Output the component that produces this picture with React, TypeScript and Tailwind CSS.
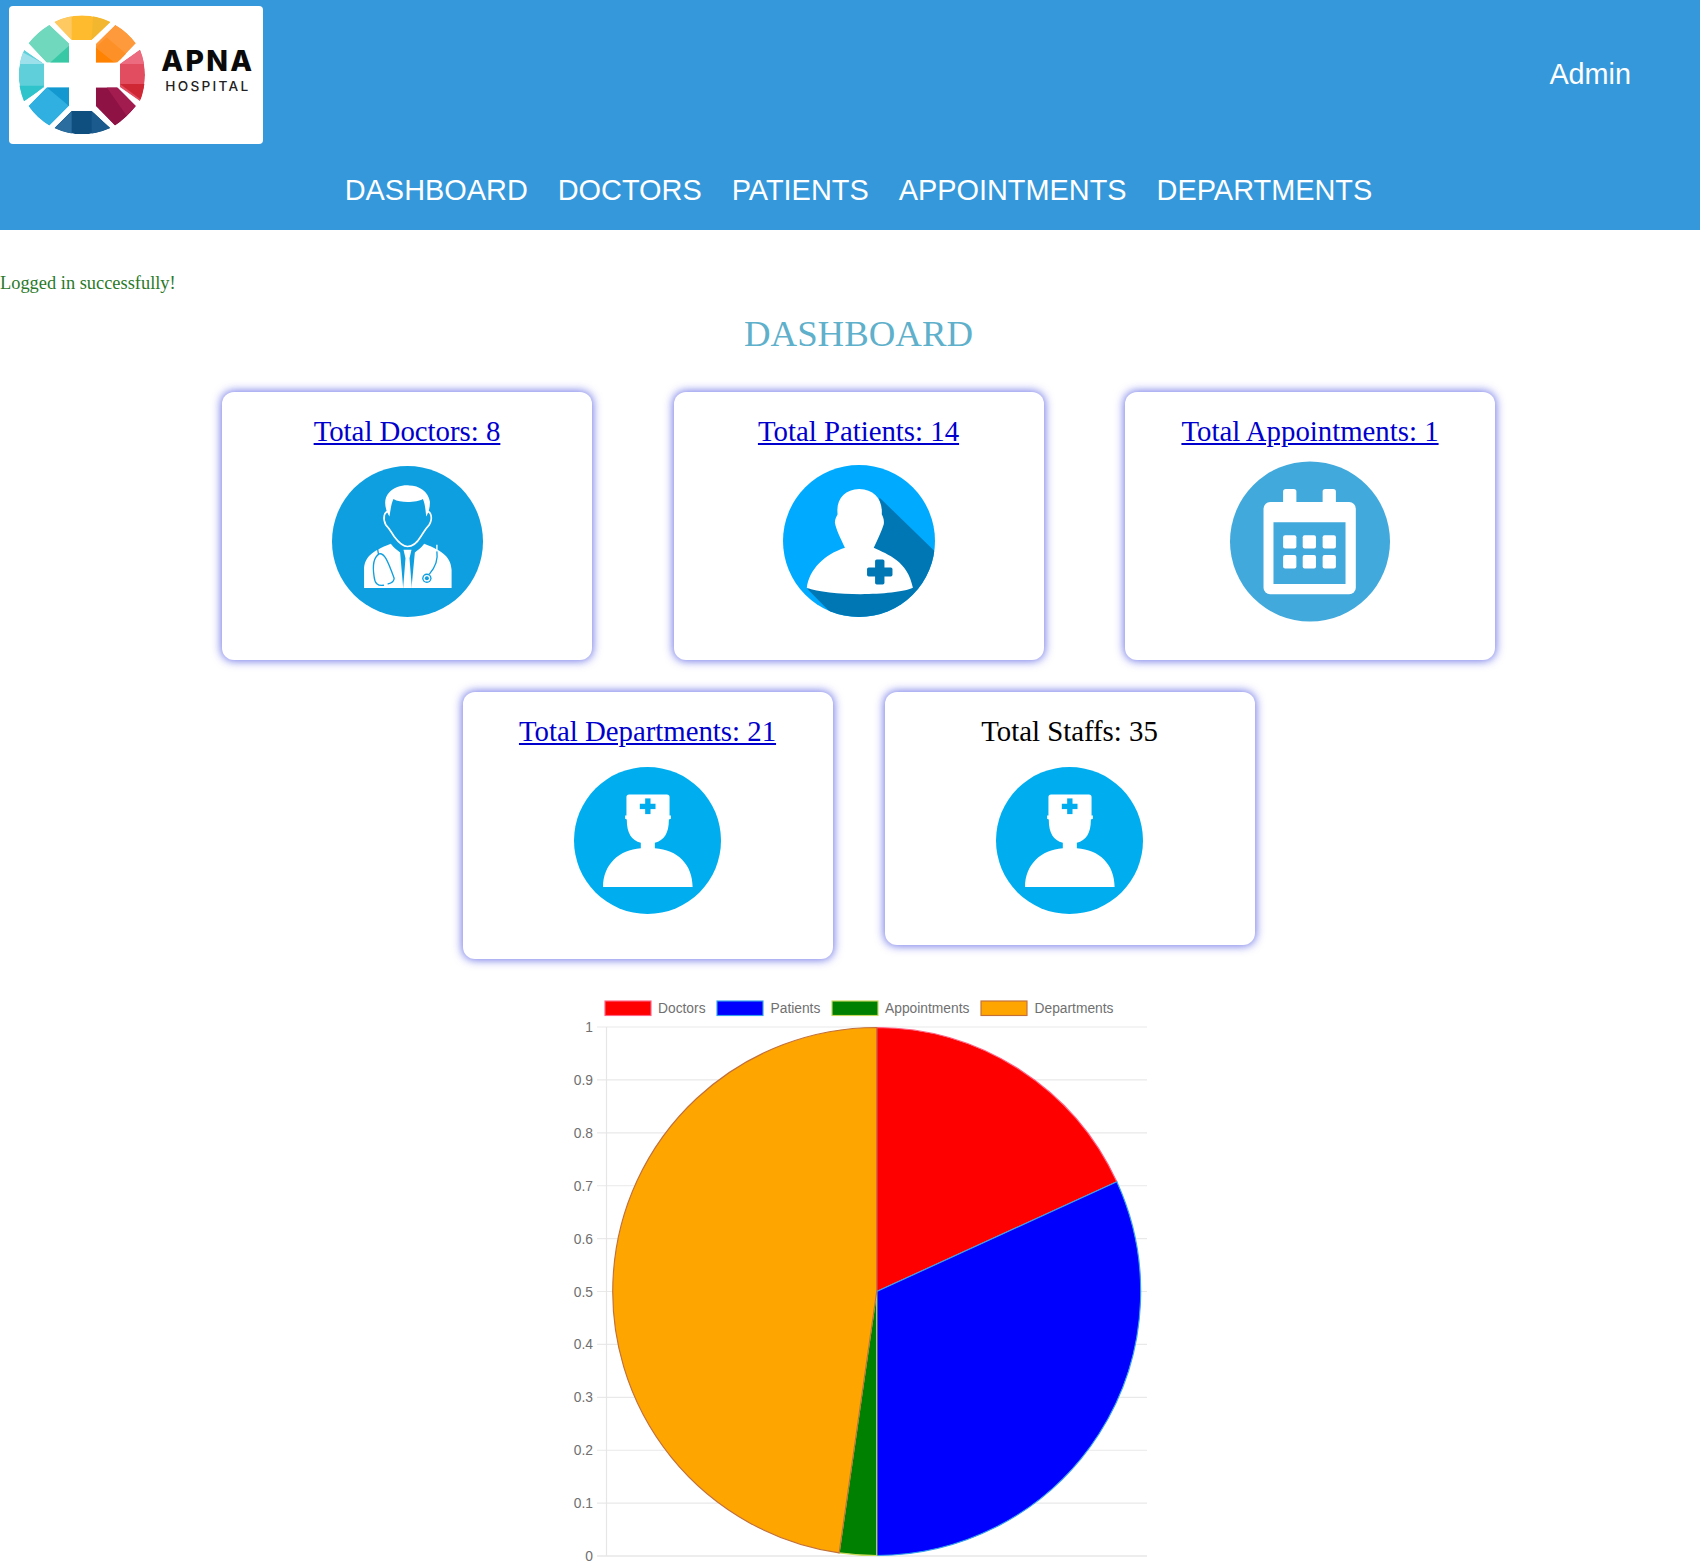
import React from "react";

const segments = [
  { id: "s1", d: "M163 64 Q245 24 331 64 L275 118 L215 118 Z", base: "#fdbb2d", facets: [{ d: "M150 40 L215 40 L215 118 L190 118 Z", fill: "#fdc960" }, { d: "M280 30 L340 30 L340 70 L275 118 Z", fill: "#f3b72f" }] },
  { id: "s2", d: "M346 72 Q385 95 408 128 L352 186 L287 186 L287 130 Z", base: "#ff9a3c", facets: [{ d: "M287 140 L345 186 L287 186 Z", fill: "#ff8200" }, { d: "M345 186 L287 140 L320 110 L385 165 Z", fill: "#fd9128" }] },
  { id: "s3", d: "M420 147 Q450 222 420 302 L360 260 L360 190 Z", base: "#e24e60", facets: [{ d: "M350 140 L440 140 L440 190 L360 190 Z", fill: "#ec6b7e" }, { d: "M360 250 L440 250 L440 310 Z", fill: "#cf2734" }] },
  { id: "s4", d: "M287 260 L352 260 L408 316 Q380 352 345 375 L287 316 Z", base: "#8f1245", facets: [{ d: "M320 260 L352 260 L408 316 L380 345 Z", fill: "#a31c50" }] },
  { id: "s5", d: "M215 330 L275 330 L331 382 Q245 420 163 382 Z", base: "#0f4f80", facets: [{ d: "M163 382 L215 330 L215 410 L163 410 Z", fill: "#2a6d9e" }, { d: "M275 330 L331 382 L331 410 L275 410 Z", fill: "#1a5a8c" }] },
  { id: "s6", d: "M140 260 L207 260 L207 316 L148 375 Q110 352 85 316 Z", base: "#2fb0e0", facets: [{ d: "M140 260 L207 260 L207 316 Z", fill: "#1398cf" }] },
  { id: "s7", d: "M72 147 L133 190 L133 260 L72 302 Q40 222 72 147 Z", base: "#5fd0da", facets: [{ d: "M40 140 L133 190 L40 190 Z", fill: "#9be0ea" }, { d: "M40 255 L133 255 L72 310 L40 310 Z", fill: "#2fc4cc" }] },
  { id: "s8", d: "M148 72 L207 128 L207 186 L140 186 L85 128 Q110 95 148 72 Z", base: "#6fd8bd", facets: [{ d: "M207 135 L207 186 L150 186 Z", fill: "#38c8a6" }] },
];

function Logo() {
  return (
    <svg width="254" height="138" viewBox="27 16 762 414" className="block">
      <defs>
        {segments.map((s) => (
          <clipPath key={s.id} id={s.id}>
            <path d={s.d} />
          </clipPath>
        ))}
      </defs>
      {segments.map((s) => (
        <g key={s.id} clipPath={`url(#${s.id})`}>
          <path d={s.d} fill={s.base} />
          {s.facets.map((f, i) => (
            <path key={i} d={f.d} fill={f.fill} />
          ))}
        </g>
      ))}
      <text x="484" y="212" fontFamily="Inter, 'Liberation Sans', Arial, sans-serif" fontWeight="800" fontSize="85" letterSpacing="7" fill="#0a0a0a">APNA</text>
      <text x="496" y="270" fontFamily="Inter, 'Liberation Sans', Arial, sans-serif" fontWeight="500" fontSize="41" letterSpacing="6.8" fill="#222">HOSPITAL</text>
    </svg>
  );
}

function DoctorIcon() {
  const blue = "#0d9fe0";
  return (
    <svg width="151" height="151" viewBox="-26 -41 452 452" className="block">
      <circle cx="200" cy="185" r="226" fill={blue} />
      <path fill="#fff" d="M146 110 C130 85 128 55 145 38 C160 22 185 15 205 17 C235 17 262 35 267 65 C268 85 262 100 256 110 C254 90 252 70 246 58 C230 68 180 72 158 58 C152 70 149 90 146 110 Z" />
      <path fill="none" stroke="#fff" strokeWidth="5" d="M144 95 C130 95 125 115 135 135 C145 145 150 155 160 170 C175 190 190 200 200 200 C212 200 228 190 240 170 C250 155 255 145 265 135 C277 115 270 95 258 95" />
      <path fill="#fff" d="M70 324 L70 270 C70 235 90 215 150 192 C160 205 170 212 178 218 L187 324 Z" />
      <path fill="#fff" d="M332 324 L332 270 C330 235 310 215 250 192 C240 205 230 212 222 218 L212 324 Z" />
      <path fill="#fff" d="M188 210 L212 210 L206 235 L213 324 L187 324 L194 235 Z" />
      <g fill="none" stroke={blue} strokeWidth="4" strokeLinecap="round">
        <path d="M128 316 C110 318 102 310 100 290 C96 265 95 235 115 222 C130 218 140 240 160 295 C160 305 150 310 142 312" />
        <path d="M110 205 L113 222" />
        <path d="M288 215 C292 240 280 265 266 282" />
      </g>
      <path d="M288 195 L288 215" stroke="#fff" strokeWidth="4" />
      <circle cx="258" cy="295" r="14" fill={blue} />
      <circle cx="258" cy="295" r="10" fill="#fff" />
      <circle cx="258" cy="295" r="6" fill={blue} />
    </svg>
  );
}

function PatientIcon() {
  return (
    <svg width="152" height="152" viewBox="367 258 454 454" className="block">
      <defs>
        <clipPath id="pc">
          <circle cx="594" cy="485" r="227" />
        </clipPath>
      </defs>
      <circle cx="594" cy="485" r="227" fill="#00aaff" />
      <path clipPath="url(#pc)" fill="#0077b5" d="M655 355 L835 530 L835 720 L530 720 L440 628 L640 500 Z" />
      <path fill="#fff" d="M552 505 C540 480 525 450 522 430 C522 418 528 410 530 405 C525 360 550 332 595 330 C640 332 665 360 662 405 C665 412 670 420 668 435 C662 455 650 480 638 505 C680 525 740 545 755 625 C700 650 500 650 438 625 C445 570 490 525 552 505 Z" />
      <rect x="642" y="540" width="28" height="75" rx="5" fill="#0077b5" />
      <rect x="618" y="564" width="76" height="27" rx="5" fill="#0077b5" />
    </svg>
  );
}

function CalendarIcon() {
  const c = "#41a9dc";
  return (
    <svg width="161" height="161" viewBox="361 243 482 482" className="block">
      <circle cx="602" cy="484" r="241" fill={c} />
      <rect x="521" y="326" width="40" height="60" rx="8" fill="#fff" />
      <rect x="640" y="326" width="40" height="60" rx="8" fill="#fff" />
      <rect x="462" y="365" width="278" height="278" rx="20" fill="#fff" />
      <rect x="492" y="426" width="217" height="186" fill={c} />
      {[521, 580, 640].map((x) =>
        [465, 525].map((y) => <rect key={`${x}-${y}`} x={x} y={y} width="40" height="40" rx="6" fill="#fff" />)
      )}
    </svg>
  );
}

function NurseIcon() {
  const c = "#00aeef";
  return (
    <svg width="147" height="147" viewBox="370 263 440 440" className="block">
      <circle cx="590" cy="483" r="220" fill={c} />
      <path fill="#fff" d="M527 353 Q527 345 535 345 L648 345 Q656 345 656 353 L656 408 L660 408 L660 418 L654 420 C654 462 640 482 612 490 L612 506 C680 510 725 555 725 622 L457 622 C457 555 505 510 570 506 L570 490 C542 482 528 462 528 420 L523 418 L523 408 L527 408 Z" />
      <rect x="583" y="357" width="16" height="47" fill={c} />
      <rect x="567" y="373" width="47" height="16" fill={c} />
    </svg>
  );
}

function Card({ title, link, h, iconGap, children }: { title: string; link: boolean; h: string; iconGap: string; children: React.ReactNode }) {
  return (
    <div className={`w-[370px] ${h} bg-white rounded-[12px] shadow-[0_0_10px_1px_rgba(15,25,215,0.6)] flex flex-col items-center pt-[21px]`}>
      {link ? (
        <a href="#" className="h-[36px] text-[28.8px] leading-[36px] text-[#0000cc] underline">{title}</a>
      ) : (
        <span className="h-[36px] text-[28.8px] leading-[36px] text-black">{title}</span>
      )}
      <div className={`${iconGap} h-[160px] w-[160px] flex items-center justify-center`}>{children}</div>
    </div>
  );
}

const cx = 876.7;
const cy = 1292.5;
const r = 264;
function slice(a: number, b: number) {
  const p = (t: number) => {
    const rad = (t * Math.PI) / 180;
    return `${(cx + r * Math.sin(rad)).toFixed(2)} ${(cy - r * Math.cos(rad)).toFixed(2)}`;
  };
  return `M${cx} ${cy} L${p(a)} A${r} ${r} 0 ${b - a > 180 ? 1 : 0} 1 ${p(b)} Z`;
}

function Chart() {
  const ticks = ["1", "0.9", "0.8", "0.7", "0.6", "0.5", "0.4", "0.3", "0.2", "0.1", "0"];
  const font = "'Liberation Sans', Arial, sans-serif";
  const legend = [
    { x: 605, tx: 658, label: "Doctors", fill: "#ff0000", stroke: "#ff6384" },
    { x: 717, tx: 770.5, label: "Patients", fill: "#0000ff", stroke: "#36a2eb" },
    { x: 832, tx: 885, label: "Appointments", fill: "#008000", stroke: "#c8d85a" },
    { x: 981, tx: 1034.5, label: "Departments", fill: "#ffa500", stroke: "#c2703a" },
  ];
  const slices = [
    { a: 0, b: 65.45, fill: "#ff0000", stroke: "#ff6384" },
    { a: 65.45, b: 180, fill: "#0000ff", stroke: "#36a2eb" },
    { a: 180, b: 188.18, fill: "#008000", stroke: "#c8d85a" },
    { a: 188.18, b: 360, fill: "#ffa500", stroke: "#c2703a" },
  ];
  return (
    <svg width="600" height="577" viewBox="560 990 600 577" className="block ml-[560px] mt-[30px]">
      {ticks.map((t, i) => {
        const y = 1028 + i * 52.9;
        return (
          <g key={t}>
            <line x1="597" x2="1147" y1={y} y2={y} stroke={i === 10 ? "#dcdcdc" : "#e9e9e9"} strokeWidth="1.15" />
            <text x="593" y={y + 5} textAnchor="end" fontFamily={font} fontSize="13.8" fill="#707070">{t}</text>
          </g>
        );
      })}
      <line x1="606.5" x2="606.5" y1="1028" y2="1557" stroke="#e6e6e6" strokeWidth="1.15" />
      {legend.map((l) => (
        <g key={l.label}>
          <rect x={l.x} y="1002" width="46" height="14.5" fill={l.fill} stroke={l.stroke} strokeWidth="1.15" />
          <text x={l.tx} y="1013.8" fontFamily={font} fontSize="13.8" fill="#707070">{l.label}</text>
        </g>
      ))}
      {slices.map((s) => (
        <path key={s.fill} d={slice(s.a, s.b)} fill={s.fill} stroke={s.stroke} strokeWidth="1.15" />
      ))}
    </svg>
  );
}

export default function App() {
  const nav = ["DASHBOARD", "DOCTORS", "PATIENTS", "APPOINTMENTS", "DEPARTMENTS"];
  return (
    <div className="w-full h-[1567px] overflow-hidden bg-white font-['Liberation_Serif',serif]">
      <div className="w-[1717px]">
        <header className="h-[230px] bg-[#3498db] font-['Liberation_Sans',Arial,sans-serif] text-white">
          <div className="h-[150px] flex items-start justify-between pl-[9px] pr-[86px] pt-[6px]">
            <div className="w-[254px] h-[138px] bg-white rounded-[4px] overflow-hidden">
              <Logo />
            </div>
            <div className="text-[28.8px] leading-[36px] mt-[50px]">Admin</div>
          </div>
          <nav className="flex justify-center gap-[30px] mt-[22px] text-[28.9px] leading-[36px]">
            {nav.map((n) => (
              <a key={n} href="#">{n}</a>
            ))}
          </nav>
        </header>
        <p className="mt-[41px] text-[18.4px] leading-[24px] text-[#2a7a2a]">Logged in successfully!</p>
        <h1 className="mt-[16px] text-center text-[36.8px] leading-[46px] font-normal text-[#5fb0cb]">DASHBOARD</h1>
        <div className="mt-[35px] flex justify-center items-start gap-[81.5px]">
          <Card title="Total Doctors: 8" link h="h-[268px]" iconGap="mt-[12px]"><DoctorIcon /></Card>
          <Card title="Total Patients: 14" link h="h-[268px]" iconGap="mt-[12px]"><PatientIcon /></Card>
          <Card title="Total Appointments: 1" link h="h-[268px]" iconGap="mt-[12px]"><CalendarIcon /></Card>
        </div>
        <div className="mt-[32px] flex justify-center items-start gap-[52px]">
          <Card title="Total Departments: 21" link h="h-[267px]" iconGap="mt-[11px]"><NurseIcon /></Card>
          <Card title="Total Staffs: 35" link={false} h="h-[253px]" iconGap="mt-[11px]"><NurseIcon /></Card>
        </div>
        <Chart />
      </div>
    </div>
  );
}
